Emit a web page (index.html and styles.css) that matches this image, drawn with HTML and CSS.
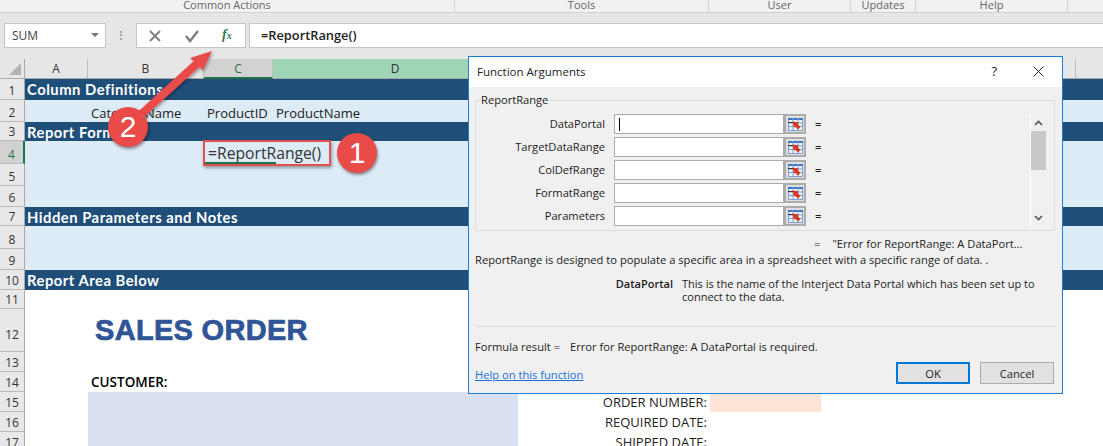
FILE: index.html
```html
<!DOCTYPE html>
<html>
  <head>
    <meta charset="utf-8">
    <title>Function Arguments</title>
    <link rel="stylesheet" href="styles.css">
  </head>
  <body>
    <svg class="defs" width="0" height="0">
      <symbol id="refedit" viewBox="0 0 15 13">
        <rect x="0.5" y="0.5" width="14" height="12" fill="#eef3fb" stroke="#7d9fd2"/>
        <rect x="0" y="0" width="15" height="2" fill="#3f76c8"/>
        <path d="M5 0v13M10 0v13M0 5h15M0 8.500h15" stroke="#7d9fd2" fill="none"/>
        <path d="M0 4.500h5" stroke="#333" fill="none"/>
        <path d="M4.500 3.500L11 4.500 9.500 6l3 3-2.500 2.500-3-3L6 10z" fill="#d9361c"/>
      </symbol>
    </svg>

    <div class="window">
      <div class="ribbon">
        <div class="group g-common">Common Actions</div>
        <div class="group g-tools">Tools</div>
        <div class="group g-user">User</div>
        <div class="group g-updates">Updates</div>
        <div class="group g-help">Help</div>
      </div>

      <div class="formula-bar">
        <div class="name-box">SUM<span class="caret"></span></div>
        <div class="grip"></div>
        <div class="func-box">
          <svg width="14" height="14" viewBox="0 0 14 14"><path d="M2 2l10 10M12 2L2 12" stroke="#7d7d7d" stroke-width="1.800" fill="none"/></svg>
          <svg width="16" height="14" viewBox="0 0 16 14"><path d="M2 7l4 5 8-10" stroke="#7d7d7d" stroke-width="2.400" fill="none"/></svg>
          <span class="fx">f<sub>x</sub></span>
        </div>
        <div class="formula-input">=ReportRange()</div>
      </div>

      <div class="col-heads">
        <div class="corner"><span class="corner-mark"></span></div>
        <div class="col col-a">A</div>
        <div class="col col-b">B</div>
        <div class="col col-c">C</div>
        <div class="col col-d">D</div>
        <div class="col col-e"></div>
        <div class="col col-rest"></div>
      </div>

      <div class="row h21"><div class="num">1</div><div class="band">Column Definitions</div></div>
      <div class="row h22">
        <div class="num">2</div>
        <div class="cells light">
          <span class="cell-a"></span>
          <span class="cell cell-b">CategoryName</span>
          <span class="cell cell-c">ProductID</span>
          <span class="cell">ProductName</span>
        </div>
      </div>
      <div class="row h19"><div class="num">3</div><div class="band">Report Format</div></div>
      <div class="row h23"><div class="num num-active">4</div><div class="cells light"></div></div>
      <div class="row h22"><div class="num">5</div><div class="cells light"></div></div>
      <div class="row h21"><div class="num">6</div><div class="cells light"></div></div>
      <div class="row h19"><div class="num">7</div><div class="band">Hidden Parameters and Notes</div></div>
      <div class="row h23"><div class="num">8</div><div class="cells light"></div></div>
      <div class="row h21"><div class="num">9</div><div class="cells light"></div></div>
      <div class="row h20"><div class="num">10</div><div class="band">Report Area Below</div></div>
      <div class="row h19"><div class="num">11</div><div class="cells"></div></div>
      <div class="row h43">
        <div class="num num-tall">12</div>
        <div class="cells"><span class="cell-a"></span><span class="sales-title">SALES ORDER</span></div>
      </div>
      <div class="row h20"><div class="num">13</div><div class="cells"></div></div>
      <div class="row h20">
        <div class="num">14</div>
        <div class="cells"><span class="cell-a"></span><b class="cell customer">CUSTOMER:</b></div>
      </div>
      <div class="row h20">
        <div class="num">15</div>
        <div class="cells">
          <span class="cell-a"></span><span class="customer-fill"></span>
          <span class="order-label">ORDER NUMBER:</span><span class="peach"></span>
        </div>
      </div>
      <div class="row h20">
        <div class="num">16</div>
        <div class="cells">
          <span class="cell-a"></span><span class="customer-fill"></span>
          <span class="order-label">REQUIRED DATE:</span>
        </div>
      </div>
      <div class="row h20">
        <div class="num">17</div>
        <div class="cells">
          <span class="cell-a"></span><span class="customer-fill"></span>
          <span class="order-label">SHIPPED DATE:</span>
        </div>
      </div>
    </div>

    <!-- selected cell and callouts drawn over the sheet -->
    <div class="cell-editor">=ReportRange()<span class="editor-green"></span></div>
    <svg class="arrow" width="240" height="130" viewBox="0 0 240 130">
      <defs>
        <filter id="soft" x="-20%" y="-20%" width="140%" height="140%">
          <feDropShadow dx="1" dy="2" stdDeviation="1.500" flood-color="#000" flood-opacity="0.35"/>
        </filter>
      </defs>
      <path d="M133.300 116L193.800 61 190 58 212 51 203 70 199.200 67 138.700 122z" fill="#e84b48" filter="url(#soft)"/>
    </svg>
    <div class="badge badge-1">1</div>
    <div class="badge badge-2">2</div>

    <div class="dialog">
      <div class="dialog-title">
        <span class="title-text">Function Arguments</span>
        <span class="help-mark">?</span>
        <svg class="close-mark" width="11" height="11" viewBox="0 0 11 11"><path d="M0.500 0.500l10 10M10.500 0.500l-10 10" stroke="#222" fill="none"/></svg>
      </div>
      <div class="dialog-body">
        <fieldset class="args">
          <legend>ReportRange</legend>
          <div class="arg-list">
            <div class="arg">
              <label>DataPortal</label>
              <div class="arg-input"><span class="text-caret"></span></div>
              <div class="ref-btn"><svg width="15" height="13"><use href="#refedit"/></svg></div>
              <span class="eq">=</span>
            </div>
            <div class="arg">
              <label>TargetDataRange</label>
              <div class="arg-input"></div>
              <div class="ref-btn"><svg width="15" height="13"><use href="#refedit"/></svg></div>
              <span class="eq">=</span>
            </div>
            <div class="arg">
              <label>ColDefRange</label>
              <div class="arg-input"></div>
              <div class="ref-btn"><svg width="15" height="13"><use href="#refedit"/></svg></div>
              <span class="eq">=</span>
            </div>
            <div class="arg">
              <label>FormatRange</label>
              <div class="arg-input"></div>
              <div class="ref-btn"><svg width="15" height="13"><use href="#refedit"/></svg></div>
              <span class="eq">=</span>
            </div>
            <div class="arg">
              <label>Parameters</label>
              <div class="arg-input"></div>
              <div class="ref-btn"><svg width="15" height="13"><use href="#refedit"/></svg></div>
              <span class="eq">=</span>
            </div>
          </div>
          <div class="scrollbar">
            <svg width="9" height="6" viewBox="0 0 9 6"><path d="M1 5l3.500-3.500L8 5" stroke="#555" stroke-width="1.600" fill="none"/></svg>
            <div class="thumb"></div>
            <svg width="9" height="6" viewBox="0 0 9 6"><path d="M1 1l3.500 3.500L8 1" stroke="#555" stroke-width="1.600" fill="none"/></svg>
          </div>
        </fieldset>

        <div class="result-line"><span class="eq">=</span><span>"Error for ReportRange: A DataPort...</span></div>
        <p class="desc">ReportRange is designed to populate a specific area in a spreadsheet with a specific range of data. .</p>
        <div class="arg-help">
          <b>DataPortal</b>
          <p>This is the name of the Interject Data Portal which has been set up to connect to the data.</p>
        </div>
        <hr>
        <div class="formula-result"><span>Formula result =</span><span>Error for ReportRange: A DataPortal is required.</span></div>
        <div class="dialog-foot">
          <a class="help-link">Help on this function</a>
          <button class="btn btn-ok" type="button">OK</button>
          <button class="btn" type="button">Cancel</button>
        </div>
      </div>
    </div>
  </body>
</html>
```

FILE: styles.css
```css
html, body {
  margin: 0;
  padding: 0;
  height: 446px;
  overflow: hidden;
  background: white;
}

body {
  position: relative;
  font-family: "Open Sans", sans-serif;
  color: #1c1c1c;
}

.defs {
  position: absolute;
}

.window {
  width: 1103px;
}

/* ribbon + formula bar */
.ribbon {
  display: flex;
  height: 12px;
  border-bottom: 1px solid #d2d2d2;
  background: #f1f1f1;
  font-size: 11px;
  line-height: 9px;
  color: #666;
  overflow: hidden;
}

.group {
  box-sizing: border-box;
  border-right: 1px solid #d4d4d4;
  text-align: center;
}

.g-common { width: 455px; }
.g-tools { width: 254px; }
.g-user { width: 142px; }
.g-updates { width: 65px; }
.g-help { width: 152px; }

.formula-bar {
  display: flex;
  align-items: stretch;
  height: 25px;
  padding: 10px 0 11px 4px;
  background: #e6e6e6;
}

.name-box {
  position: relative;
  box-sizing: border-box;
  width: 102px;
  padding: 3px 7px;
  border: 1px solid #c6c6c6;
  background: white;
  font-size: 12px;
  line-height: 18px;
  color: #444;
}

.caret {
  position: absolute;
  right: 6px;
  top: 9px;
  border-left: 4px solid transparent;
  border-right: 4px solid transparent;
  border-top: 4px solid #777;
}

.grip {
  width: 2px;
  margin: 8px 14px 8px 14px;
  border-left: 2px dotted #a8a8a8;
  box-sizing: border-box;
}

.func-box {
  display: flex;
  align-items: center;
  box-sizing: border-box;
  width: 110px;
  padding-left: 11px;
  gap: 22px;
  border: 1px solid #c6c6c6;
  background: white;
}

.fx {
  font-family: "Liberation Serif", serif;
  font-style: italic;
  font-weight: bold;
  font-size: 14px;
  line-height: 14px;
  color: #2e7d4f;
}

.fx sub {
  font-size: 10px;
  vertical-align: baseline;
}

.formula-input {
  flex: 1;
  margin-left: 3px;
  padding-left: 11px;
  border-top: 1px solid #c6c6c6;
  border-bottom: 1px solid #c6c6c6;
  border-left: 1px solid #c6c6c6;
  background: white;
  font-size: 12.800px;
  font-weight: 600;
  line-height: 23px;
  color: #222;
}

/* sheet */
.col-heads {
  display: flex;
  height: 19px;
  border-bottom: 1px solid #a9a9a9;
  background: #e6e6e6;
  font-size: 12px;
  line-height: 19px;
  color: #333;
}

.corner {
  position: relative;
  box-sizing: border-box;
  width: 25px;
  border-right: 1px solid #a9a9a9;
}

.corner-mark {
  position: absolute;
  right: 3px;
  bottom: 3px;
  border-left: 12px solid transparent;
  border-bottom: 12px solid #b4b4b4;
}

.col {
  box-sizing: border-box;
  border-right: 1px solid #bdbdbd;
  text-align: center;
}

.col-a { width: 63px; }
.col-b { width: 116px; }
.col-c {
  width: 69px;
  height: 20px;
  border-bottom: 2px solid #1f7246;
  background: #d2d2d2;
  color: #1f7246;
}
.col-d { width: 244px; background: #9fd5b7; border-right: none; }
.col-e { width: 559px; }
.col-rest { flex: 1; border-right: none; }

.row {
  display: flex;
  box-sizing: border-box;
}

.h19 { height: 19px; }
.h20 { height: 20px; }
.h21 { height: 21px; }
.h22 { height: 22px; }
.h23 { height: 23px; }
.h43 { height: 43px; }

.num {
  flex: 0 0 25px;
  box-sizing: border-box;
  display: flex;
  align-items: flex-end;
  justify-content: center;
  border-right: 1px solid #a9a9a9;
  border-bottom: 1px solid #b9b9b9;
  background: #e8e8e8;
  font-size: 12px;
  line-height: 16px;
  color: #333;
}

.num-active {
  border-right: 2px solid #1f7246;
  background: #d2d2d2;
  color: #1f7246;
}

.num-tall {
  padding-bottom: 8px;
}

.band {
  flex: 1;
  padding-left: 2px;
  background: #1f4e79;
  font-family: "Lato", sans-serif;
  font-size: 14.800px;
  font-weight: bold;
  letter-spacing: 0.5px;
  line-height: 20px;
  color: white;
}

.cells {
  flex: 1;
  display: flex;
  align-items: flex-end;
  font-size: 13px;
  line-height: 18px;
  color: #222;
}

.light {
  background: #ddebf7;
}

.cell-a {
  flex: 0 0 63px;
}

.cell {
  padding-left: 3px;
}

.cell-b {
  width: 113px;
}

.cell-c {
  width: 66px;
}

.sales-title {
  align-self: flex-start;
  padding: 4px 0 0 7px;
  font-family: "Liberation Sans", sans-serif;
  font-size: 29px;
  font-weight: bold;
  line-height: 34px;
  letter-spacing: 0.3px;
  -webkit-text-stroke: 0.7px #2f5597;
  color: #2f5597;
}

.customer {
  padding-bottom: 1px;
  font-size: 13.500px;
  font-weight: 600;
  color: black;
}

.customer-fill {
  align-self: stretch;
  flex: 0 0 430px;
  background: #d9e0f1;
}

.order-label {
  flex: 0 0 189px;
  padding-bottom: 1px;
  text-align: right;
}

.peach {
  align-self: stretch;
  flex: 0 0 111px;
  margin-left: 3px;
  background: #fde4d6;
}

/* things lying over the sheet */
.cell-editor {
  position: absolute;
  left: 203px;
  top: 140px;
  box-sizing: border-box;
  width: 128px;
  height: 26px;
  padding-left: 3px;
  border: 2px solid #e0504c;
  box-shadow: 1px 2px 3px rgba(0, 0, 0, 0.35);
  background: #ddebf7;
  font-size: 15.700px;
  line-height: 22px;
  color: #333;
}

.editor-green {
  position: absolute;
  left: 0;
  bottom: 0;
  width: 71px;
  height: 2px;
  background: #1f7246;
}

.arrow {
  position: absolute;
  left: 0;
  top: 0;
}

.badge {
  position: absolute;
  width: 40px;
  height: 40px;
  border-radius: 50%;
  background: #e84b48;
  box-shadow: 1px 2px 3px rgba(0, 0, 0, 0.4);
  font-family: "Liberation Sans", sans-serif;
  font-size: 30px;
  line-height: 40px;
  text-align: center;
  color: white;
}

.badge-1 {
  left: 337px;
  top: 133px;
}

.badge-2 {
  left: 108px;
  top: 107px;
}

/* dialog */
.dialog {
  position: absolute;
  left: 468px;
  top: 56px;
  box-sizing: border-box;
  width: 595px;
  height: 338px;
  border: 1px solid #1b7ed6;
  background: #f0f0f0;
  font-size: 11.150px;
  color: #1c1c1c;
}

.dialog-title {
  display: flex;
  align-items: center;
  box-sizing: border-box;
  height: 30px;
  padding: 0 18px 2px 8px;
  background: white;
}

.title-text {
  flex: 1;
  font-size: 11.500px;
}

.help-mark {
  margin-right: 36px;
  font-size: 13px;
}

.dialog-body {
  padding: 7px 7px 0 6px;
}

.args {
  display: flex;
  box-sizing: border-box;
  width: 580px;
  height: 137px;
  margin: 0;
  padding: 8px 8px 0 0;
  border: 1px solid #dcdcdc;
}

.args legend {
  margin-left: 5px;
  padding: 0;
  line-height: 12px;
}

.arg-list {
  flex: 1;
  display: flex;
  flex-direction: column;
  gap: 3px;
}

.arg {
  display: flex;
  align-items: center;
  height: 20px;
}

.arg label {
  width: 129px;
  margin-right: 9px;
  padding-bottom: 2px;
  text-align: right;
}

.arg-input {
  position: relative;
  box-sizing: border-box;
  width: 170px;
  height: 20px;
  border: 1px solid #ababab;
  background: white;
}

.text-caret {
  position: absolute;
  left: 4px;
  top: 3px;
  width: 1px;
  height: 13px;
  background: black;
}

.ref-btn {
  display: flex;
  align-items: center;
  justify-content: center;
  box-sizing: border-box;
  width: 22px;
  height: 20px;
  border: 2px solid #ababab;
  background: #dfdfdf;
}

.eq {
  width: 9px;
  margin-left: 9px;
  padding-bottom: 2px;
  font-weight: 600;
}

.scrollbar {
  display: flex;
  flex-direction: column;
  align-items: center;
  box-sizing: border-box;
  width: 16px;
  height: 112px;
  padding-top: 6px;
  border-left: 1px solid white;
}

.thumb {
  align-self: stretch;
  height: 39px;
  margin: 5px 0 45px;
  background: #c8c8c8;
}

.result-line {
  display: flex;
  height: 14px;
  margin: 6px 0 0 339px;
  line-height: 14px;
}

.result-line .eq {
  width: auto;
  margin: 0 12px 0 0;
  padding-bottom: 0;
  font-weight: normal;
}

.desc {
  margin: 2px 0 0;
  line-height: 14px;
}

.arg-help {
  display: flex;
  margin-top: 10px;
  font-size: 11px;
  line-height: 13px;
}

.arg-help b {
  flex: 0 0 198px;
  text-align: right;
  font-weight: 600;
}

.arg-help p {
  width: 390px;
  margin: 0 0 0 9px;
}

.dialog hr {
  width: 581px;
  margin: 23px 0 0;
  border: none;
  border-top: 1px solid #dcdcdc;
}

.formula-result {
  display: flex;
  gap: 10px;
  margin-top: 13px;
  line-height: 14px;
}

.dialog-foot {
  display: flex;
  align-items: flex-end;
  margin-top: 8px;
  padding-right: 1px;
}

.help-link {
  flex: 1;
  padding-bottom: 2px;
  color: #1a6fd6;
  text-decoration: underline;
}

.btn {
  box-sizing: border-box;
  width: 74px;
  height: 22px;
  margin-left: 10px;
  padding: 0;
  border: 1px solid #adadad;
  background: #e1e1e1;
  font-family: "Open Sans", sans-serif;
  font-size: 11.150px;
  color: #1c1c1c;
}

.btn-ok {
  border: 2px solid #0078d7;
}
```
